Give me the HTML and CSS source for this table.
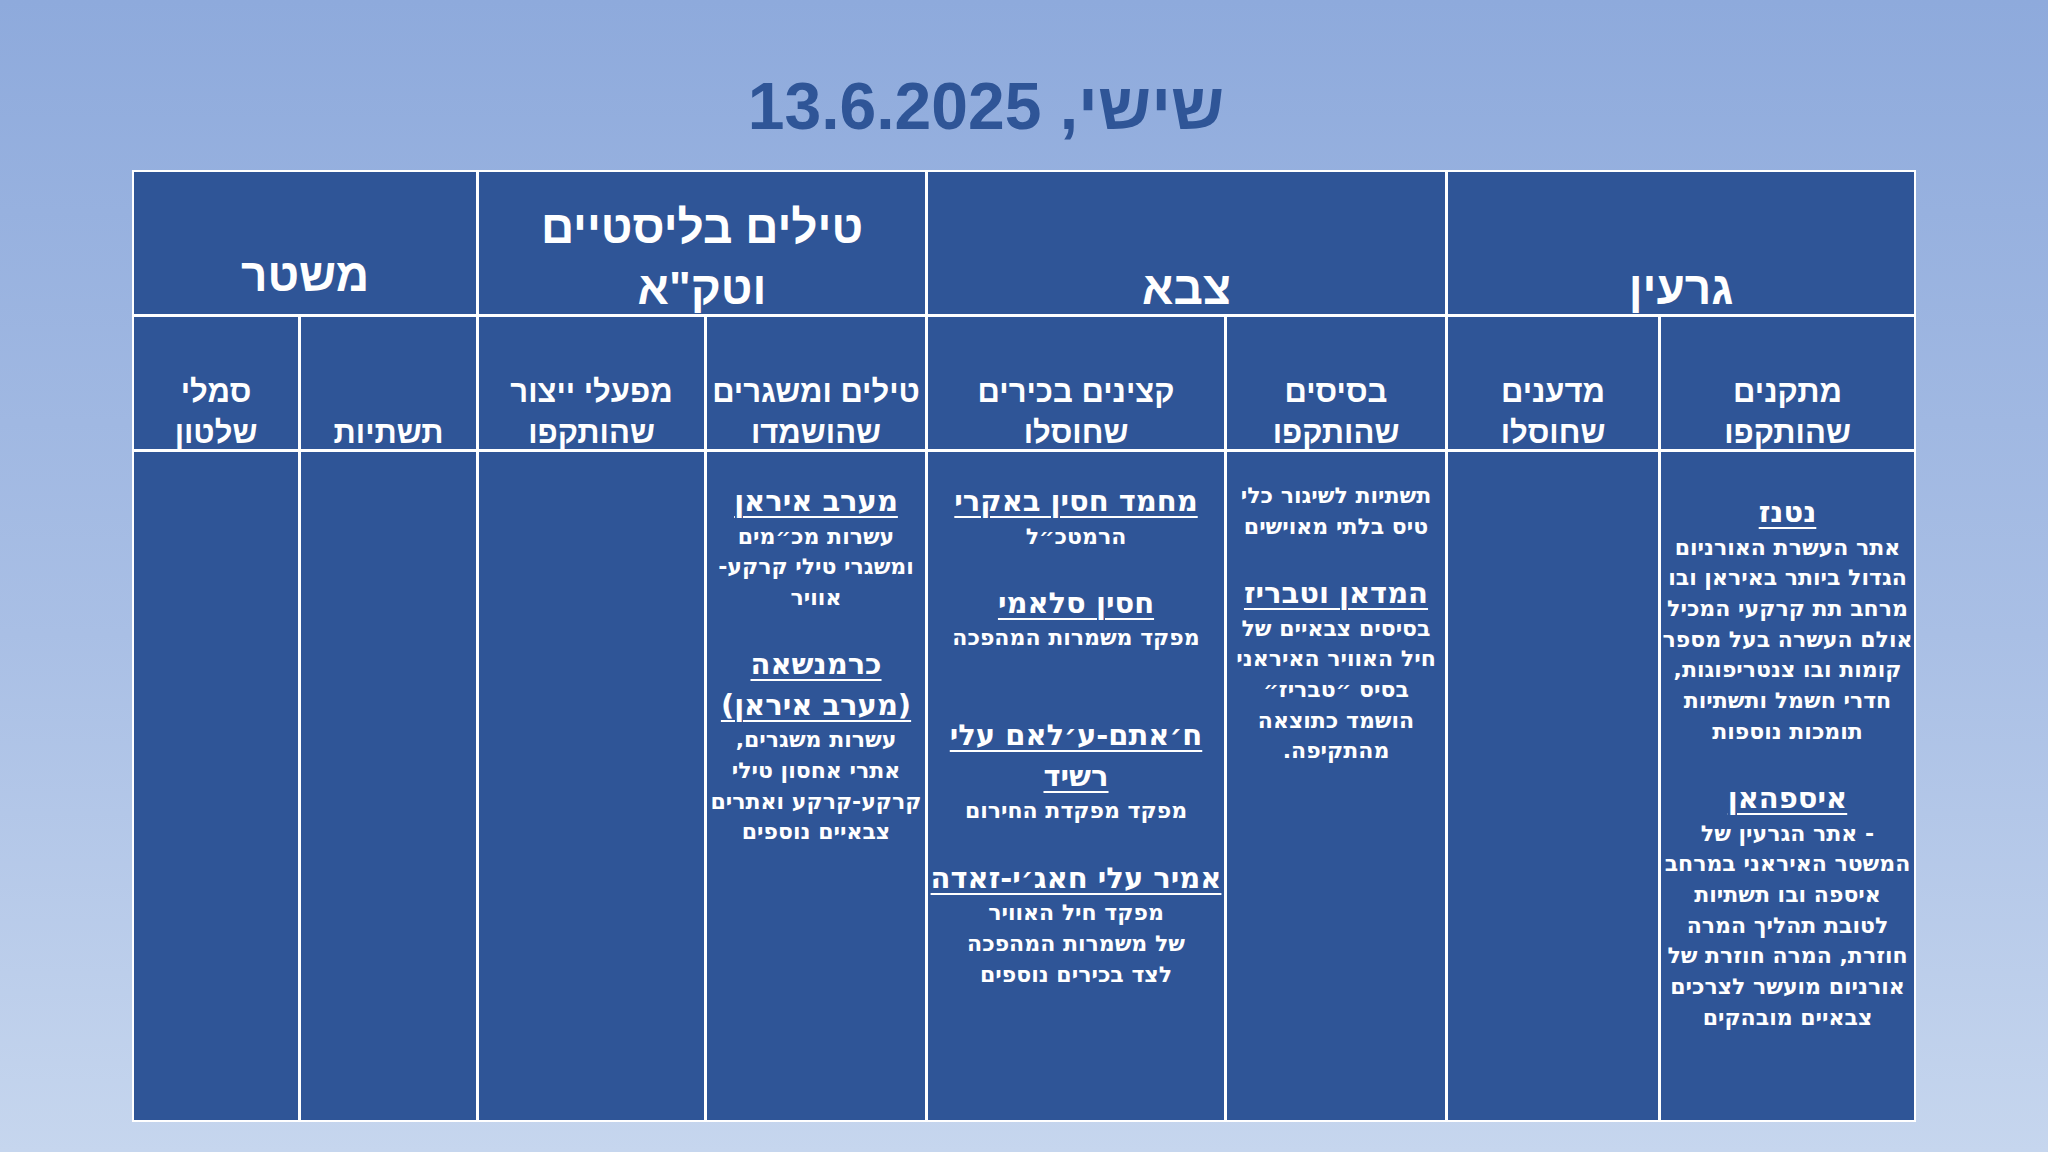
FILE: index.html
```html
<!DOCTYPE html>
<html lang="he" dir="rtl">
<head>
<meta charset="utf-8">
<title>שישי, 13.6.2025</title>
<link rel="stylesheet" href="styles.css">
</head>
<body>
<div class="slide">
  <h1 class="title">שישי, 13.6.2025</h1>
  <div class="table">
    <div class="cell head span2"><div class="head-text">גרעין</div></div>
    <div class="cell head span2"><div class="head-text">צבא</div></div>
    <div class="cell head span2"><div class="head-text">טילים בליסטיים<br>וטק"א</div></div>
    <div class="cell head span2 head-regime"><div class="head-text">משטר</div></div>

    <div class="cell sub"><div class="sub-text">מתקנים<br>שהותקפו</div></div>
    <div class="cell sub"><div class="sub-text">מדענים<br>שחוסלו</div></div>
    <div class="cell sub"><div class="sub-text">בסיסים<br>שהותקפו</div></div>
    <div class="cell sub"><div class="sub-text">קצינים בכירים<br>שחוסלו</div></div>
    <div class="cell sub"><div class="sub-text">טילים ומשגרים<br>שהושמדו</div></div>
    <div class="cell sub"><div class="sub-text">מפעלי ייצור<br>שהותקפו</div></div>
    <div class="cell sub"><div class="sub-text">תשתיות</div></div>
    <div class="cell sub"><div class="sub-text">סמלי<br>שלטון</div></div>

    <div class="cell body body-first">
      <div class="item-title">נטנז</div>
      <div class="item-text">אתר העשרת האורניום<br>הגדול ביותר באיראן ובו<br>מרחב תת קרקעי המכיל<br>אולם העשרה בעל מספר<br>קומות ובו צנטריפוגות,<br>חדרי חשמל ותשתיות<br>תומכות נוספות</div>
      <div class="blank"></div>
      <div class="item-title">איספהאן</div>
      <div class="item-text">- אתר הגרעין של<br>המשטר האיראני במרחב<br>איספה ובו תשתיות<br>לטובת תהליך המרה<br>חוזרת, המרה חוזרת של<br>אורניום מועשר לצרכים<br>צבאיים מובהקים</div>
    </div>
    <div class="cell body"></div>
    <div class="cell body">
      <div class="item-text">תשתיות לשיגור כלי<br>טיס בלתי מאוישים</div>
      <div class="blank"></div>
      <div class="item-title">המדאן וטבריז</div>
      <div class="item-text">בסיסים צבאיים של<br>חיל האוויר האיראני<br>בסיס ״טבריז״<br>הושמד כתוצאה<br>מהתקיפה.</div>
    </div>
    <div class="cell body">
      <div class="item-title">מחמד חסין באקרי</div>
      <div class="item-text">הרמטכ״ל</div>
      <div class="blank"></div>
      <div class="item-title">חסין סלאמי</div>
      <div class="item-text">מפקד משמרות המהפכה</div>
      <div class="blank"></div>
      <div class="blank"></div>
      <div class="item-title">ח׳אתם-ע׳לאם עלי<br>רשיד</div>
      <div class="item-text">מפקד מפקדת החירום</div>
      <div class="blank"></div>
      <div class="item-title">אמיר עלי חאג׳י-זאדה</div>
      <div class="item-text">מפקד חיל האוויר<br>של משמרות המהפכה<br>לצד בכירים נוספים</div>
    </div>
    <div class="cell body">
      <div class="item-title">מערב איראן</div>
      <div class="item-text">עשרות מכ״מים<br>ומשגרי טילי קרקע-<br>אוויר</div>
      <div class="blank"></div>
      <div class="item-title">כרמנשאה<br>(מערב איראן)</div>
      <div class="item-text">עשרות משגרים,<br>אתרי אחסון טילי<br>קרקע-קרקע ואתרים<br>צבאיים נוספים</div>
    </div>
    <div class="cell body"></div>
    <div class="cell body"></div>
    <div class="cell body"></div>
  </div>
</div>
</body>
</html>
```

FILE: styles.css
```css
html, body {
  margin: 0;
  padding: 0;
}

body {
  width: 2048px;
  height: 1152px;
  overflow: hidden;
  background: linear-gradient(180deg, #8eaadc 0%, #a9bfe5 55%, #c6d6ee 100%);
  font-family: "Liberation Sans", Arial, sans-serif;
}

.slide {
  width: 2048px;
  height: 1152px;
  display: flex;
  flex-direction: column;
  align-items: center;
}

.title {
  margin: 0;
  padding: 66px 76px 0 0;
  width: 2048px;
  box-sizing: border-box;
  text-align: center;
  font-family: "Liberation Sans", Arial, sans-serif;
  font-weight: bold;
  font-size: 66px;
  line-height: 80px;
  color: #2f5597;
}

.table {
  margin-top: 24px;
  display: grid;
  grid-template-columns: 253px 210px 218px 296px 218px 225px 175px 164px;
  grid-template-rows: 142px 132px 668px;
  gap: 3px;
  border: 2px solid #ffffff;
  background: #ffffff;
}

.cell {
  background: #2f5597;
  color: #ffffff;
  text-align: center;
  display: flex;
  flex-direction: column;
  align-items: center;
}

.span2 {
  grid-column: span 2;
}

.head {
  justify-content: flex-end;
}

.head-text {
  font-family: "Liberation Sans", Arial, sans-serif;
  font-weight: bold;
  font-size: 46px;
  line-height: 61px;
  margin-bottom: -5px;
}

.head-regime .head-text {
  margin-bottom: 8px;
}

.sub {
  justify-content: flex-end;
}

.sub-text {
  font-family: "Liberation Sans", Arial, sans-serif;
  font-weight: bold;
  font-size: 31px;
  line-height: 41px;
  margin-bottom: -4px;
}

.body {
  justify-content: flex-start;
  padding-top: 29px;
}

.body-first {
  padding-top: 40px;
}

.item-title {
  font-family: "DejaVu Sans", "Liberation Sans", sans-serif;
  font-weight: bold;
  font-size: 29px;
  line-height: 40.5px;
  text-decoration: underline;
  text-decoration-thickness: 2px;
  text-underline-offset: 5px;
  white-space: nowrap;
}

.item-text {
  font-family: "DejaVu Sans", "Liberation Sans", sans-serif;
  font-weight: bold;
  font-size: 22px;
  line-height: 30.7px;
  white-space: nowrap;
}

.blank {
  height: 30.7px;
}
```
